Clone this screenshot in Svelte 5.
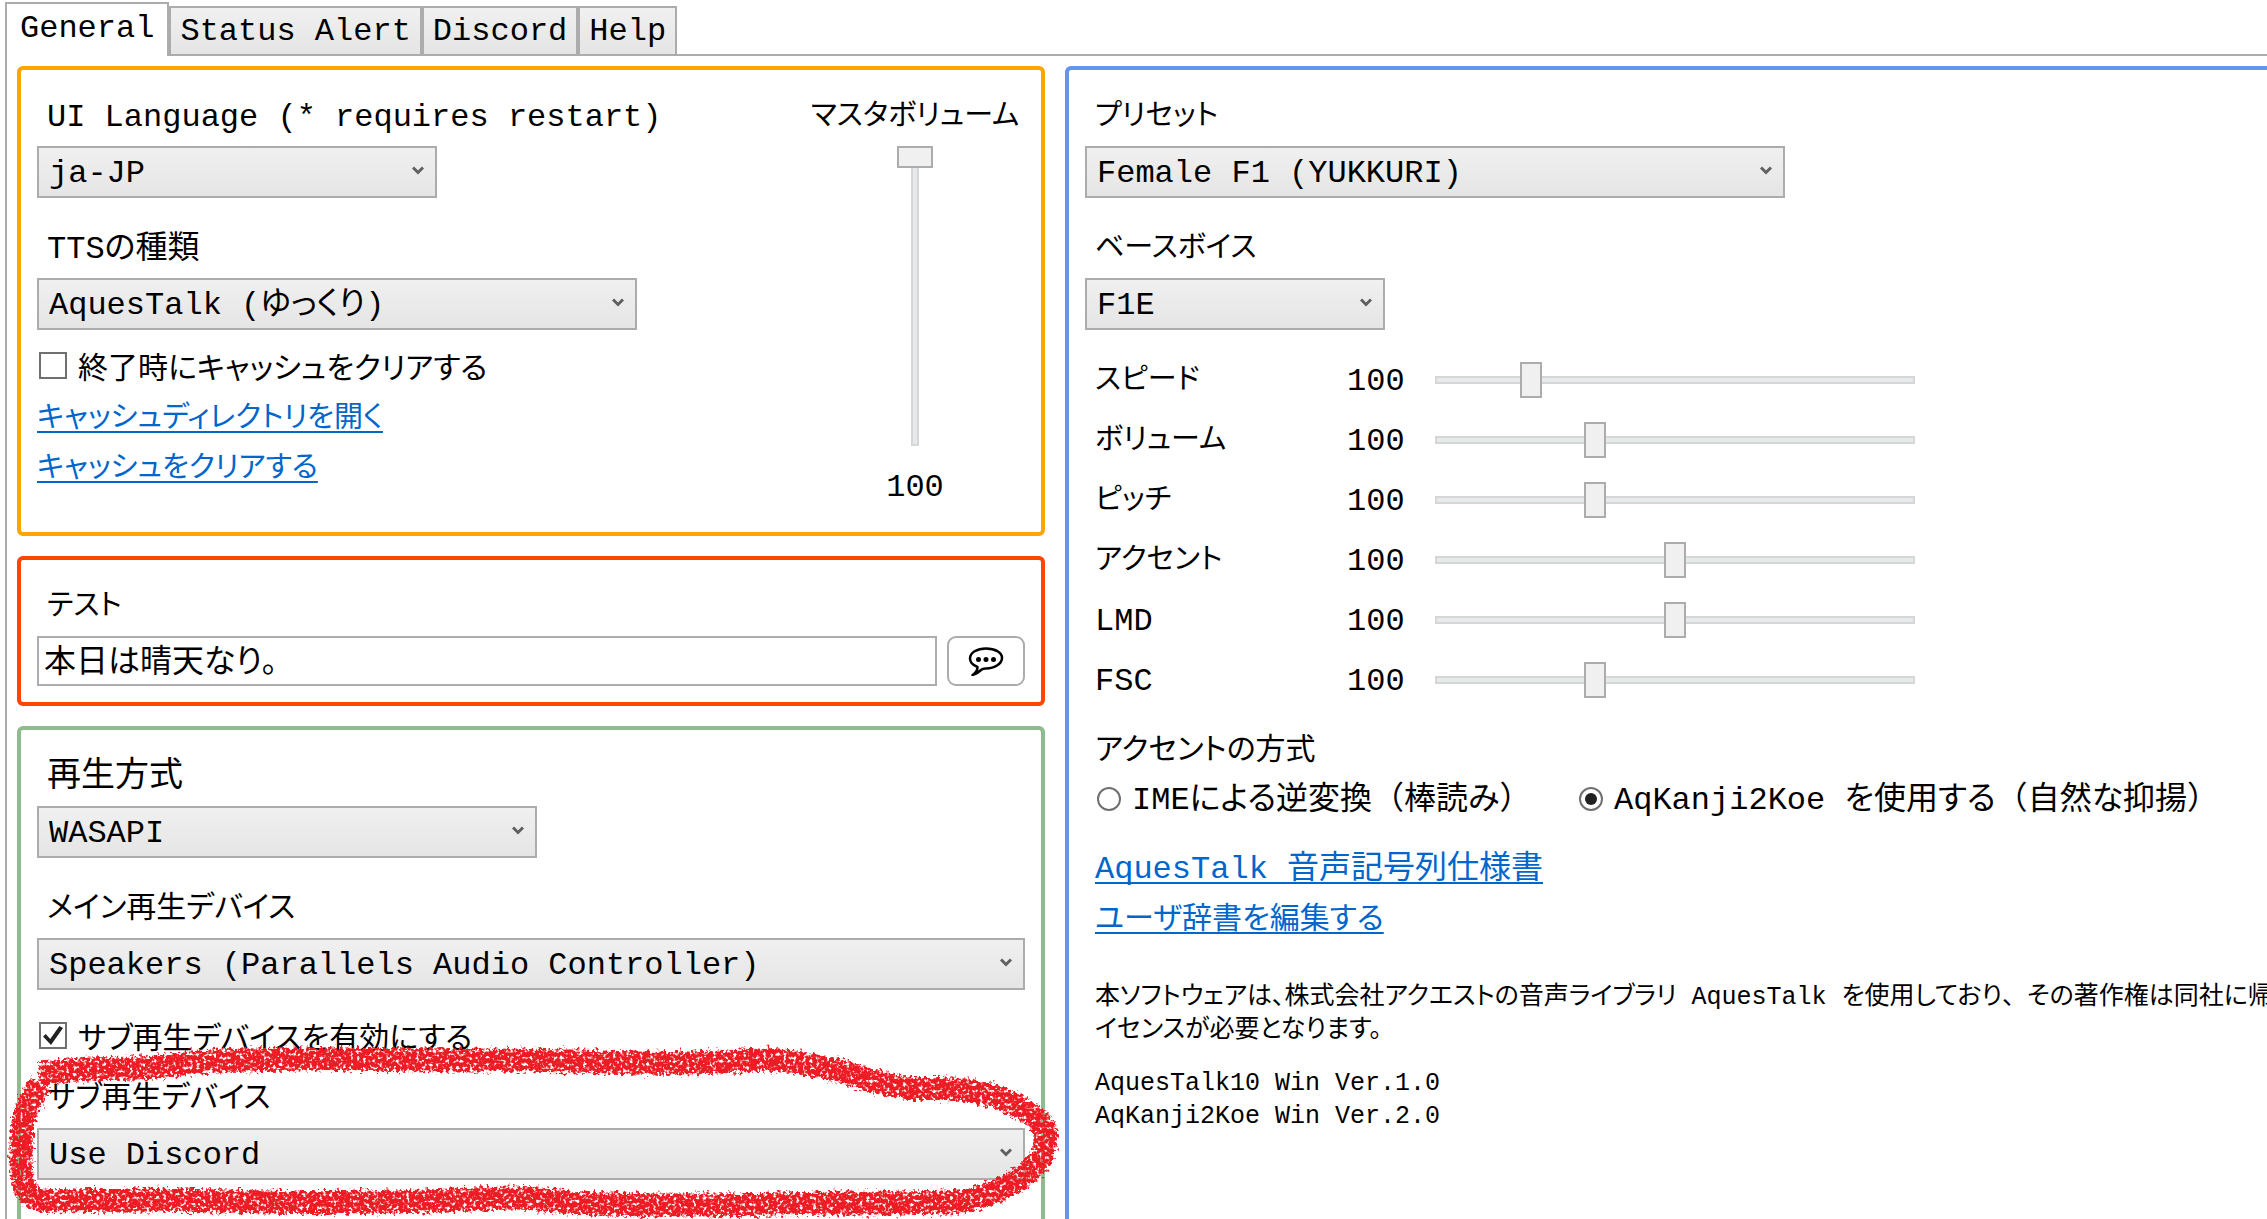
<script lang="ts">
	type Slider = { id: string; name: string; min: number; max: number; value: number };

	const tabs = ['General', 'Status Alert', 'Discord', 'Help'];
	let activeTab = $state('General');

	let masterVolume = $state(100);
	let clearOnExit = $state(false);
	let useSubDevice = $state(true);
	let testText = $state('本日は晴天なり。');
	let accentMode = $state('kanji2koe');

	let sliders = $state<Slider[]>([
		{ id: 'speed', name: 'スピード', min: 50, max: 300, value: 100 },
		{ id: 'volume', name: 'ボリューム', min: 0, max: 300, value: 100 },
		{ id: 'pitch', name: 'ピッチ', min: 50, max: 200, value: 100 },
		{ id: 'accent', name: 'アクセント', min: 0, max: 200, value: 100 },
		{ id: 'lmd', name: 'LMD', min: 0, max: 200, value: 100 },
		{ id: 'fsc', name: 'FSC', min: 50, max: 200, value: 100 }
	]);
</script>

{#snippet combo(id: string, value: string, size: string)}
	<div class={`combo ${size}`}>
		<select {id}>
			<option>{value}</option>
		</select>
		<svg class="arrow" viewBox="0 0 12 10" aria-hidden="true">
			<path d="M1 1.5 L6 6.5 L11 1.5" />
		</svg>
	</div>
{/snippet}

<div class="window">
	<div class="tabs" role="tablist">
		{#each tabs as tab}
			<button
				class="tab"
				class:active={tab === activeTab}
				role="tab"
				aria-selected={tab === activeTab}
				onclick={() => (activeTab = tab)}>{tab}</button>
		{/each}
	</div>

	<main class="page">
		<div class="column">
			<section class="panel orange">
				<div class="settings">
					<label class="label" for="language">UI Language (* requires restart)</label>
					{@render combo('language', 'ja-JP', 'w400')}
					<label class="label spaced" for="tts">TTSの種類</label>
					{@render combo('tts', 'AquesTalk (ゆっくり)', 'w600')}
					<label class="option clear-option mixed">
						<input type="checkbox" bind:checked={clearOnExit} />
						<span>終了時にキャッシュをクリアする</span>
					</label>
					<a class="link kana" href="#open-cache">キャッシュディレクトリを開く</a>
					<a class="link kana" href="#clear-cache">キャッシュをクリアする</a>
				</div>
				<div class="master">
					<label class="label kana" for="master">マスタボリューム</label>
					<input id="master" class="vertical" type="range" min="0" max="100" bind:value={masterVolume} />
					<output class="label" for="master">{masterVolume}</output>
				</div>
			</section>

			<section class="panel red">
				<label class="label kana" for="test">テスト</label>
				<div class="test-row">
					<input id="test" class="text" type="text" bind:value={testText} />
					<button class="speak" aria-label="再生">
						<svg viewBox="0 0 36 30" aria-hidden="true">
							<path
								class="bubble"
								d="M9.500 21 C4.500 19 2 16 2 12.500 C2 6.500 9 2.500 18 2.500 C27 2.500 34 6.500 34 12 C34 17.500 27 22.500 18 22.500 C16 22.500 14.500 22.500 13 24 C11 26 8.500 28 4.500 29 C7.500 27 9.500 24 9.500 21 Z" />
							<circle cx="10.500" cy="13.500" r="2.500" />
							<circle cx="18" cy="13.500" r="2.500" />
							<circle cx="25.500" cy="13.500" r="2.500" />
						</svg>
					</button>
				</div>
			</section>

			<section class="panel green">
				<label class="label kanji" for="method">再生方式</label>
				{@render combo('method', 'WASAPI', 'w500')}
				<label class="label mixed spaced" for="main-device">メイン再生デバイス</label>
				{@render combo('main-device', 'Speakers (Parallels Audio Controller)', 'full')}
				<label class="option sub-option mixed">
					<input type="checkbox" bind:checked={useSubDevice} />
					<span>サブ再生デバイスを有効にする</span>
				</label>
				<label class="label mixed" for="sub-device">サブ再生デバイス</label>
				{@render combo('sub-device', 'Use Discord', 'full')}
			</section>
		</div>

		<section class="panel blue">
			<label class="label kana" for="preset">プリセット</label>
			{@render combo('preset', 'Female F1 (YUKKURI)', 'w700')}
			<label class="label kana spaced" for="voice">ベースボイス</label>
			{@render combo('voice', 'F1E', 'w300')}

			<div class="sliders">
				{#each sliders as slider}
					<label class="label" class:kana={!/^[A-Z]+$/.test(slider.name)} for={slider.id}>{slider.name}</label>
					<output class="value" for={slider.id}>{slider.value}</output>
					<input
						id={slider.id}
						class="horizontal"
						type="range"
						min={slider.min}
						max={slider.max}
						bind:value={slider.value} />
				{/each}
			</div>

			<div class="details">
				<p class="heading mixed">アクセントの方式</p>
				<div class="radios">
					<label class="option">
						<input type="radio" name="accent-mode" value="ime" bind:group={accentMode} />
						<span>IMEによる逆変換<span class="wide">（</span>棒読み<span class="wide">）</span></span>
					</label>
					<label class="option">
						<input type="radio" name="accent-mode" value="kanji2koe" bind:group={accentMode} />
						<span>AqKanji2Koe を使用する<span class="wide">（</span>自然な抑揚<span class="wide">）</span></span>
					</label>
				</div>
				<div class="links">
					<a class="link" href="#spec">AquesTalk 音声記号列仕様書</a>
					<a class="link mixed" href="#dictionary">ユーザ辞書を編集する</a>
				</div>
				<p class="note">
					本ソフトウェアは、株式会社アクエストの音声ライブラリ AquesTalk を使用しており<span class="wide">、</span>その著作権は同社に帰<br />イセンスが必要となります。
				</p>
				<p class="note">AquesTalk10 Win Ver.1.0<br />AqKanji2Koe Win Ver.2.0</p>
			</div>
		</section>
	</main>

	<!-- hand drawn marker around the sub device setting -->
	<svg class="marker" viewBox="0 0 1080 189" aria-hidden="true">
		<defs>
			<filter id="rough" x="-5%" y="-20%" width="110%" height="140%" color-interpolation-filters="sRGB">
				<feTurbulence type="fractalNoise" baseFrequency="0.3" numOctaves="2" seed="4" result="noise" />
				<feDisplacementMap
					in="SourceGraphic"
					in2="noise"
					scale="12"
					xChannelSelector="R"
					yChannelSelector="G"
					result="edge" />
				<feColorMatrix in="noise" type="matrix" values="0 0 0 0 0  0 0 0 0 0  0 0 0 0 0  0 0 -5 0 3.7" result="grain" />
				<feComposite in="edge" in2="grain" operator="in" result="ink" />
				<feGaussianBlur in="ink" stdDeviation="0.6" />
			</filter>
		</defs>
		<g filter="url(#rough)">
			<path
				d="M39 44 C60 42 75 40 89 39 S130 39 156 37 S190 32 214 31 S280 29 312 29 S420 30 469 30 S560 30 603 32 S700 33 740 31 S768 28 788 31 S810 35 830 39 S858 47 873 51 S890 56 905 58 S950 56 973 61 S1001 69 1014 75 S1046 90 1046 107 S1038 138 1014 152 S970 171 947 172 S900 173 873 173 S810 173 773 174 S720 175 670 175 S640 174 603 174 S550 168 513 168 S420 172 379 172 S310 173 268 172 S180 170 134 170 S65 172 42 170 S21 140 21 117 S25 75 41 54" />
		</g>
	</svg>
</div>

<style>
	:global(body) {
		overflow: hidden;
		background: #fff;
	}

	.window {
		position: relative;
		height: 100vh;
		display: flex;
		flex-direction: column;
		padding: 2px 0 0 5px;
		box-sizing: border-box;
		overflow: hidden;
		color: #000;
		font-family: 'Liberation Mono', 'Noto Sans CJK JP', monospace;
		font-size: 32px;
		font-feature-settings: 'palt';
	}

	button,
	input,
	select {
		margin: 0;
		color: inherit;
		font: inherit;
		font-feature-settings: inherit;
	}

	p {
		margin: 0;
	}

	.kana {
		font-size: 29px;
	}

	.mixed {
		font-size: 30px;
	}

	.kanji {
		font-size: 34px;
	}

	.wide {
		font-feature-settings: normal;
	}

	/* tabs */
	.tabs {
		position: relative;
		display: flex;
		align-items: flex-end;
		margin-bottom: -2px;
	}

	.tab {
		height: 50px;
		padding: 2px 9px 0;
		border: 2px solid #acacac;
		background: linear-gradient(#f0f0f0, #e5e5e5);
		line-height: 44px;
	}

	.tab.active {
		height: 54px;
		padding: 0 13px 2px;
		border-bottom: none;
		background: #fff;
	}

	.page {
		flex: 1;
		display: flex;
		align-items: stretch;
		gap: 20px;
		min-height: 0;
		padding: 10px 0 0 10px;
		border: 2px solid #acacac;
		border-width: 2px 0 0 2px;
	}

	/* panels */
	.column {
		flex: 0 0 1028px;
		display: flex;
		flex-direction: column;
		gap: 20px;
	}

	.panel {
		box-sizing: border-box;
		padding: 16px;
		border: 4px solid;
		border-radius: 6px;
	}

	.orange {
		display: flex;
		justify-content: space-between;
		height: 470px;
		border-color: #ffa500;
	}

	.red {
		border-color: #ff4500;
	}

	.green {
		flex: 1;
		border-color: #8fbc8f;
		border-bottom: none;
		border-radius: 6px 6px 0 0;
	}

	.blue {
		flex: 1;
		min-width: 0;
		padding-right: 0;
		border-color: #6495ed;
		border-width: 4px 0 0 4px;
		border-radius: 6px 0 0 0;
	}

	.settings {
		display: flex;
		flex-direction: column;
		align-items: flex-start;
	}

	.label {
		display: block;
		padding: 3px 0 0 10px;
		line-height: 57px;
		white-space: nowrap;
	}

	.spaced {
		margin-top: 20px;
	}

	/* combo boxes */
	.combo {
		position: relative;
		height: 52px;
	}

	.combo select {
		width: 100%;
		height: 100%;
		padding: 2px 40px 0 10px;
		border: 2px solid #acacac;
		border-radius: 0;
		background: linear-gradient(#f0f0f0, #e5e5e5);
		appearance: none;
	}

	.arrow {
		position: absolute;
		top: 20px;
		right: 13px;
		width: 12px;
		height: 10px;
		fill: none;
		stroke: #606060;
		stroke-width: 3;
	}

	.w300 {
		width: 300px;
	}

	.w400 {
		width: 400px;
	}

	.w500 {
		width: 500px;
	}

	.w600 {
		width: 600px;
	}

	.w700 {
		width: 700px;
	}

	.full {
		width: 100%;
	}

	/* check boxes and radio buttons */
	.option {
		display: flex;
		align-items: flex-start;
		gap: 11px;
		padding-left: 2px;
		line-height: 50px;
		white-space: nowrap;
	}

	.clear-option {
		margin-top: 15px;
	}

	.sub-option {
		margin: 25px 0 3px;
	}

	.option input {
		flex: none;
		display: grid;
		place-items: center;
		width: 28px;
		height: 27px;
		margin-top: 7px;
		border: 2px solid #707070;
		background: #fff;
		appearance: none;
	}

	.option input[type='checkbox']:checked::before {
		content: '';
		width: 20px;
		height: 19px;
		background: #212121;
		clip-path: polygon(0 55%, 14% 42%, 36% 68%, 82% 0, 100% 10%, 40% 100%);
	}

	.option input[type='radio'] {
		width: 24px;
		height: 24px;
		margin-top: 11px;
		border-radius: 50%;
	}

	.option input[type='radio']:checked::before {
		content: '';
		width: 12px;
		height: 12px;
		border-radius: 50%;
		background: #212121;
	}

	.link {
		display: block;
		width: fit-content;
		color: #0066cc;
		line-height: 50px;
		text-decoration: underline;
		text-decoration-thickness: 2px;
		text-underline-offset: 4px;
		text-decoration-skip-ink: none;
		white-space: nowrap;
	}

	/* master volume */
	.master {
		display: flex;
		flex-direction: column;
		align-items: center;
		width: 220px;
	}

	.master .label {
		padding-left: 0;
	}

	.vertical {
		width: 36px;
		height: 300px;
		margin-bottom: 10px;
		background:
			linear-gradient(#e7eaea, #e7eaea) center / 4px calc(100% - 4px) no-repeat,
			linear-gradient(#d6d6d6, #d6d6d6) center / 8px 100% no-repeat;
		writing-mode: vertical-lr;
		direction: rtl;
		appearance: none;
	}

	.vertical::-webkit-slider-thumb {
		box-sizing: border-box;
		width: 36px;
		height: 22px;
		border: 2px solid #acacac;
		background: #f0f0f0;
		appearance: none;
	}

	/* test phrase */
	.test-row {
		display: flex;
		gap: 10px;
	}

	.text {
		flex: 1;
		box-sizing: border-box;
		min-width: 0;
		height: 50px;
		padding: 0 5px 6px;
		border: 2px solid #abadb3;
		background: #fff;
	}

	.speak {
		display: flex;
		align-items: center;
		justify-content: center;
		width: 78px;
		height: 50px;
		padding: 0;
		border: 2px solid #acacac;
		border-radius: 9px;
		background: #fff;
	}

	.speak svg {
		width: 36px;
		height: 30px;
	}

	.bubble {
		fill: none;
		stroke: #000;
		stroke-width: 2.5;
		stroke-linejoin: round;
	}

	/* voice parameters */
	.sliders {
		display: grid;
		grid-template-columns: 262px 77px minmax(0, 502px);
		align-items: center;
		margin-top: 20px;
	}

	.value {
		padding-top: 3px;
		line-height: 57px;
	}

	.horizontal {
		width: 100%;
		height: 36px;
		background:
			linear-gradient(#e7eaea, #e7eaea) center / calc(100% - 26px) 4px no-repeat,
			linear-gradient(#d6d6d6, #d6d6d6) center / calc(100% - 22px) 8px no-repeat;
		appearance: none;
	}

	.horizontal::-webkit-slider-thumb {
		box-sizing: border-box;
		width: 22px;
		height: 36px;
		border: 2px solid #acacac;
		background: #f0f0f0;
		appearance: none;
	}

	.details {
		margin-top: 16px;
		padding-left: 10px;
	}

	.heading {
		line-height: 50px;
	}

	.radios {
		display: grid;
		grid-template-columns: 482px auto;
	}

	.links {
		margin: 19px 0 36px;
	}

	.note {
		margin-bottom: 20px;
		font-size: 25px;
		line-height: 33px;
		white-space: nowrap;
	}

	.marker {
		position: absolute;
		top: 1030px;
		left: 0;
		width: 1080px;
		height: 189px;
		overflow: visible;
		pointer-events: none;
	}

	.marker path {
		fill: none;
		stroke: #ed1c24;
		stroke-width: 23;
	}
</style>
